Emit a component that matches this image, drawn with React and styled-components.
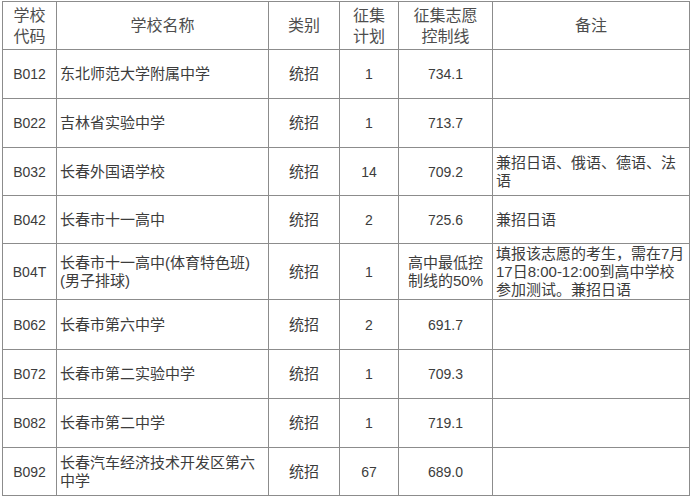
import React from "react";
import styled, { createGlobalStyle } from "styled-components";

const GlobalStyle = createGlobalStyle`
  body {
    margin: 0;
    background: #fff;
  }
`;

const Page = styled.div`
  padding: 1px 0 0 2px;
  font-family: "Liberation Sans", "Noto Sans CJK SC", sans-serif;
`;

const Table = styled.table`
  border-collapse: collapse;
  table-layout: fixed;
  width: 688px;
  color: #3c3c3c;
`;

const Row = styled.tr`
  height: ${(p) => p.h}px;
`;

const Th = styled.th`
  border: 1px solid #8c8c8c;
  font-weight: normal;
  font-size: 16px;
  line-height: 21px;
  color: #4d4d4d;
  text-align: center;
  vertical-align: middle;
  padding: 0 1px;
`;

const Td = styled.td`
  border: 1px solid #8c8c8c;
  font-size: ${(p) => (p.num ? "14px" : "15px")};
  line-height: 18px;
  text-align: ${(p) => (p.left ? "left" : "center")};
  vertical-align: middle;
  padding: 0 3px;
  overflow: hidden;
  white-space: nowrap;
`;

const rows = [
  { code: "B012", name: ["东北师范大学附属中学"], plan: "1", line: ["734.1"], note: [], h: 49 },
  { code: "B022", name: ["吉林省实验中学"], plan: "1", line: ["713.7"], note: [], h: 49 },
  { code: "B032", name: ["长春外国语学校"], plan: "14", line: ["709.2"], note: ["兼招日语、俄语、德语、法", "语"], h: 48 },
  { code: "B042", name: ["长春市十一高中"], plan: "2", line: ["725.6"], note: ["兼招日语"], h: 48 },
  {
    code: "B04T",
    name: ["长春市十一高中(体育特色班)", "(男子排球)"],
    plan: "1",
    line: ["高中最低控", "制线的50%"],
    note: ["填报该志愿的考生，需在7月", "17日8:00-12:00到高中学校", "参加测试。兼招日语"],
    h: 56,
  },
  { code: "B062", name: ["长春市第六中学"], plan: "2", line: ["691.7"], note: [], h: 50 },
  { code: "B072", name: ["长春市第二实验中学"], plan: "1", line: ["709.3"], note: [], h: 49 },
  { code: "B082", name: ["长春市第二中学"], plan: "1", line: ["719.1"], note: [], h: 49 },
  { code: "B092", name: ["长春汽车经济技术开发区第六", "中学"], plan: "67", line: ["689.0"], note: [], h: 48 },
];

const Lines = ({ items }) =>
  items.map((t, i) => (
    <React.Fragment key={i}>
      {i > 0 && <br />}
      {t}
    </React.Fragment>
  ));

export default function App() {
  return (
    <Page>
      <GlobalStyle />
      <Table>
        <colgroup>
          <col style={{ width: 54 }} />
          <col style={{ width: 212 }} />
          <col style={{ width: 71 }} />
          <col style={{ width: 59 }} />
          <col style={{ width: 94 }} />
          <col style={{ width: 197 }} />
        </colgroup>
        <thead>
          <Row h={48}>
            <Th>学校<br />代码</Th>
            <Th>学校名称</Th>
            <Th>类别</Th>
            <Th>征集<br />计划</Th>
            <Th>征集志愿<br />控制线</Th>
            <Th>备注</Th>
          </Row>
        </thead>
        <tbody>
          {rows.map((r) => (
            <Row h={r.h} key={r.code}>
              <Td num>{r.code}</Td>
              <Td left>
                <Lines items={r.name} />
              </Td>
              <Td>统招</Td>
              <Td num>{r.plan}</Td>
              <Td num={r.line.length === 1}>
                <Lines items={r.line} />
              </Td>
              <Td left>
                <Lines items={r.note} />
              </Td>
            </Row>
          ))}
        </tbody>
      </Table>
    </Page>
  );
}
